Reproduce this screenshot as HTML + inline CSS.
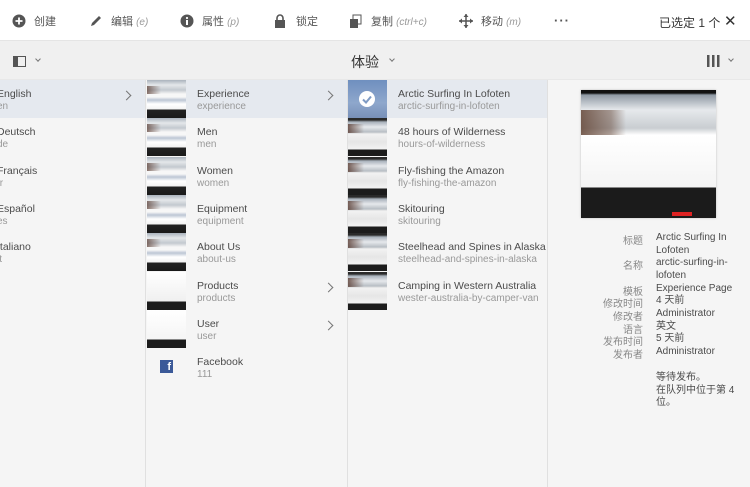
<!DOCTYPE html>
<html><head><meta charset="utf-8"><style>
*{box-sizing:border-box;margin:0;padding:0}
body{width:750px;height:487px;overflow:hidden;font-family:"Liberation Sans","Noto Sans CJK SC",sans-serif;background:#f5f5f5;position:relative;color:#4b4b4b}
.tb{position:absolute;top:0;left:0;width:750px;height:41px;background:#fff;border-bottom:1px solid #e5e5e5}
.tb span{position:absolute;top:13px;font-size:11px;color:#555;white-space:nowrap}
.tb i{font-style:italic;color:#999;font-size:10px}
.hd{position:absolute;top:41px;left:0;width:750px;height:39px;background:#f0f0f0;border-bottom:1px solid #e8e8e8}
.col{position:absolute;top:80px;height:407px;background:#f5f5f5}
.row{position:absolute;left:0;height:38px;width:100%}
.row .t{position:absolute;top:8px;font-size:10.5px;color:#4b4b4b;white-space:nowrap}
.row .s{position:absolute;top:21px;font-size:10px;color:#999;white-space:nowrap}
.sel{background:#e5e9ef}
.th{position:absolute;top:0;width:39px;height:38px;background:
 linear-gradient(to right,rgba(90,60,50,.7) 0,rgba(90,60,50,0) 14px) 0 6px/39px 8px no-repeat,
 linear-gradient(#aab3bc 0,#e4e7ea 5px,#c3c9cf 10px,#f7f7f7 14px,#f7f7f7 17px,#bcc6d4 20px,#fff 24px,#f3f3f3 29px,#222 30px,#1a1a1a 38px)}
.th2{position:absolute;top:0;width:39px;height:38px;background:
 linear-gradient(to right,rgba(90,60,50,.8) 0,rgba(90,60,50,0) 16px) 0 6px/39px 9px no-repeat,
 linear-gradient(#2a2a2a 0,#2a2a2a 2px,#a9b2bb 4px,#e6e9ec 9px,#b8bec4 14px,#f2f2f2 16px,#e6e6e6 24px,#f2f2f2 31px,#1c1c1c 32px,#1c1c1c 38px)}
.chev{position:absolute;top:12px;width:7px;height:7px;border-right:1.5px solid #777;border-top:1.5px solid #777;transform:rotate(45deg)}
.k{position:absolute;left:548px;width:95px;text-align:right;font-size:10px;color:#888}
.v{position:absolute;left:656px;font-size:10px;color:#4b4b4b;line-height:12.6px;width:90px}
</style></head><body>
<div class="tb">
<svg style="position:absolute;left:12px;top:14px" width="14" height="14"><circle cx="7" cy="7" r="6.5" fill="#555"/><path d="M7 3.5v7M3.5 7h7" stroke="#fff" stroke-width="1.8"/></svg><span style="left:34px">创建</span>
<svg style="position:absolute;left:89px;top:14px" width="14" height="14"><path d="M2 12l1-3 7-7 2 2-7 7z" fill="#555"/></svg><span style="left:111px">编辑 <i>(e)</i></span>
<svg style="position:absolute;left:180px;top:14px" width="14" height="14"><circle cx="7" cy="7" r="6.5" fill="#555"/><rect x="6" y="6" width="2" height="5" fill="#fff"/><circle cx="7" cy="4" r="1.1" fill="#fff"/></svg><span style="left:202px">属性 <i>(p)</i></span>
<svg style="position:absolute;left:274px;top:14px" width="12" height="14"><rect x="1" y="6" width="10" height="8" fill="#555"/><path d="M3 6V4a3 3 0 016 0v2" stroke="#555" stroke-width="1.6" fill="none"/></svg><span style="left:296px">锁定</span>
<svg style="position:absolute;left:349px;top:14px" width="14" height="14"><rect x="4" y="1" width="8" height="9" fill="none" stroke="#555"/><rect x="1" y="5" width="8" height="9" fill="#555"/></svg><span style="left:371px">复制 <i>(ctrl+c)</i></span>
<svg style="position:absolute;left:459px;top:14px" width="14" height="14"><path d="M7 0v14M0 7h14" stroke="#555" stroke-width="1.5"/><path d="M7 0l-2.5 3h5zM7 14l-2.5-3h5zM0 7l3-2.5v5zM14 7l-3-2.5v5z" fill="#555"/></svg><span style="left:481px">移动 <i>(m)</i></span>
<span style="left:554px;top:13px;font-size:13px;font-weight:bold;letter-spacing:1px">···</span>
<span style="left:659px;top:14px;font-size:12px;color:#333">已选定 1 个</span>
<span style="left:724px;top:12px;font-size:15px;color:#333">✕</span>
</div>
<div class="hd">
<svg style="position:absolute;left:13px;top:15px" width="13" height="11"><rect x=".5" y=".5" width="12" height="10" fill="none" stroke="#555"/><rect x="1" y="1" width="4" height="9" fill="#555"/></svg>
<div class="chev" style="top:16px;left:36px;width:4px;height:4px;transform:rotate(135deg);border-width:1px"></div>
<span style="position:absolute;left:351px;top:11px;font-size:14px;color:#333">体验</span>
<div class="chev" style="top:16px;left:390px;width:4px;height:4px;transform:rotate(135deg);border-width:1px"></div>
<svg style="position:absolute;left:707px;top:14px" width="13" height="12"><rect x="0" y="0" width="2.5" height="12" fill="#555"/><rect x="5" y="0" width="2.5" height="12" fill="#555"/><rect x="10" y="0" width="2.5" height="12" fill="#555"/></svg>
<div class="chev" style="top:16px;left:729px;width:4px;height:4px;transform:rotate(135deg);border-width:1px"></div>
</div>

<div class="col" style="left:0;width:146px;border-right:1px solid #e0e0e0">
<div class="row sel" style="top:0"><span class="t" style="left:-3px">English</span><span class="s" style="left:-3px">en</span><div class="chev" style="left:123px"></div></div>
<div class="row" style="top:38px"><span class="t" style="left:-3px">Deutsch</span><span class="s" style="left:-3px">de</span></div>
<div class="row" style="top:77px"><span class="t" style="left:-3px">Français</span><span class="s" style="left:-3px">fr</span></div>
<div class="row" style="top:115px"><span class="t" style="left:-3px">Español</span><span class="s" style="left:-3px">es</span></div>
<div class="row" style="top:153px"><span class="t" style="left:-3px">Italiano</span><span class="s" style="left:-3px">it</span></div>
</div>

<div class="col" style="left:147px;width:201px;border-right:1px solid #e0e0e0">
<div class="row sel" style="top:0"><div class="th"></div><span class="t" style="left:50px">Experience</span><span class="s" style="left:50px">experience</span><div class="chev" style="left:178px"></div></div>
<div class="row" style="top:38px"><div class="th"></div><span class="t" style="left:50px">Men</span><span class="s" style="left:50px">men</span></div>
<div class="row" style="top:77px"><div class="th"></div><span class="t" style="left:50px">Women</span><span class="s" style="left:50px">women</span></div>
<div class="row" style="top:115px"><div class="th"></div><span class="t" style="left:50px">Equipment</span><span class="s" style="left:50px">equipment</span></div>
<div class="row" style="top:153px"><div class="th"></div><span class="t" style="left:50px">About Us</span><span class="s" style="left:50px">about-us</span></div>
<div class="row" style="top:192px"><div class="th" style="background:linear-gradient(#fff 0,#f0f0f0 29px,#1c1c1c 30px)"></div><span class="t" style="left:50px">Products</span><span class="s" style="left:50px">products</span><div class="chev" style="left:178px"></div></div>
<div class="row" style="top:230px"><div class="th" style="background:linear-gradient(#fff 0,#f5f5f5 29px,#1c1c1c 30px)"></div><span class="t" style="left:50px">User</span><span class="s" style="left:50px">user</span><div class="chev" style="left:178px"></div></div>
<div class="row" style="top:268px"><div class="th" style="background:#f5f5f5"><div style="position:absolute;left:13px;top:12px;width:13px;height:13px;background:#3b5998;color:#fff;font-size:11px;font-weight:bold;text-align:right;padding-right:2px;line-height:15px">f</div></div><span class="t" style="left:50px">Facebook</span><span class="s" style="left:50px">111</span></div>
</div>

<div class="col" style="left:348px;width:200px;border-right:1px solid #e0e0e0">
<div class="row sel" style="top:0;width:199px"><div class="th2" style="background:linear-gradient(#6f8fbf,#8ea7cc 60%,#7890b8)"><svg style="position:absolute;left:10px;top:10px" width="18" height="18"><circle cx="9" cy="9" r="8" fill="#fff"/><path d="M5 9.5l3 3 5-6" stroke="#7f9bc4" stroke-width="2" fill="none"/></svg></div><span class="t" style="left:50px">Arctic Surfing In Lofoten</span><span class="s" style="left:50px">arctic-surfing-in-lofoten</span></div>
<div class="row" style="top:38px"><div class="th2"></div><span class="t" style="left:50px">48 hours of Wilderness</span><span class="s" style="left:50px">hours-of-wilderness</span></div>
<div class="row" style="top:77px"><div class="th2"></div><span class="t" style="left:50px">Fly-fishing the Amazon</span><span class="s" style="left:50px">fly-fishing-the-amazon</span></div>
<div class="row" style="top:115px"><div class="th2"></div><span class="t" style="left:50px">Skitouring</span><span class="s" style="left:50px">skitouring</span></div>
<div class="row" style="top:153px"><div class="th2"></div><span class="t" style="left:50px">Steelhead and Spines in Alaska</span><span class="s" style="left:50px">steelhead-and-spines-in-alaska</span></div>
<div class="row" style="top:192px"><div class="th2"></div><span class="t" style="left:50px">Camping in Western Australia</span><span class="s" style="left:50px">wester-australia-by-camper-van</span></div>
</div>

<div style="position:absolute;left:581px;top:90px;width:135px;height:128px;box-shadow:0 0 2px #bbb;background:
 linear-gradient(to right,rgba(100,70,55,.85) 0,rgba(100,70,55,.5) 30px,rgba(100,70,55,0) 45px) 0 20px/135px 25px no-repeat,
 linear-gradient(#111 0,#111 3px,#8f99a4 5px,#e6e9ec 20px,#c9cdd1 38px,#fff 45px,#f4f4f4 97px,#1b1b1b 98px,#1b1b1b 128px)"></div>
<div style="position:absolute;left:672px;top:212px;width:20px;height:4px;background:#d22"></div>

<div class="k" style="top:232px">标题</div><div class="v" style="top:232px">Arctic Surfing In Lofoten</div>
<div class="k" style="top:257px">名称</div><div class="v" style="top:257px">arctic-surfing-in-lofoten</div>
<div class="k" style="top:283px">模板</div><div class="v" style="top:283px">Experience Page</div>
<div class="k" style="top:295px">修改时间</div><div class="v" style="top:295px">4 天前</div>
<div class="k" style="top:308px">修改者</div><div class="v" style="top:308px">Administrator</div>
<div class="k" style="top:321px">语言</div><div class="v" style="top:321px">英文</div>
<div class="k" style="top:333px">发布时间</div><div class="v" style="top:333px">5 天前</div>
<div class="k" style="top:346px">发布者</div><div class="v" style="top:346px">Administrator</div>
<div class="v" style="top:372px">等待发布。<br>在队列中位于第 4 位。</div>
</body></html>
